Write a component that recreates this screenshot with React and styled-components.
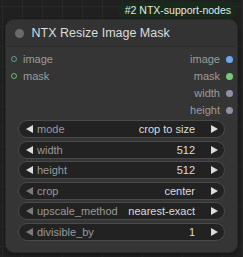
import React from "react";
import styled, { createGlobalStyle } from "styled-components";

const Global = createGlobalStyle`
  html, body { margin: 0; padding: 0; }
  body {
    width: 243px;
    height: 257px;
    overflow: hidden;
    background-color: #202020;
    background-image:
      linear-gradient(to right, #292929 1px, transparent 1px),
      linear-gradient(to bottom, #292929 1px, transparent 1px);
    background-size: 20px 20px;
    background-position: 2px 6px;
    font-family: "Liberation Sans", Arial, sans-serif;
  }
`;

const Page = styled.div`
  display: flex;
  flex-direction: column;
  align-items: stretch;
  padding: 2px 6px 0 6px;
  gap: 2px;
`;

const Badge = styled.div`
  align-self: flex-end;
  margin-right: 1px;
  height: 16px;
  padding: 0 5px 0 6px;
  display: flex;
  align-items: center;
  background: #172b1b;
  border-radius: 6px;
  color: #e6e6e6;
  font-size: 10.5px;
  white-space: nowrap;
`;

const Node = styled.div`
  width: 231px;
  background: #353535;
  border-radius: 8px;
  box-shadow: 0 0 0 1px #2b2b2b, 0 2px 6px rgba(0, 0, 0, 0.5);
  display: flex;
  flex-direction: column;
  overflow: hidden;
`;

const Title = styled.div`
  height: 26px;
  display: flex;
  align-items: center;
  gap: 8px;
  padding-left: 8.5px;
  background: #333;
  border-bottom: 1px solid #2c2c2c;
  color: #dcdcdc;
  font-size: 12.5px;
`;

const TitleDot = styled.span`
  width: 9px;
  height: 9px;
  border-radius: 50%;
  background: #6a6a6a;
`;

const Body = styled.div`
  display: flex;
  flex-direction: column;
  padding: 3.5px 0 11px 0;
`;

const SlotRow = styled.div`
  height: 17px;
  display: flex;
  align-items: center;
  justify-content: space-between;
  padding: 0 4px 0 5px;
  font-size: 11px;
  color: #9c9c9c;
`;

const Side = styled.div`
  display: flex;
  align-items: center;
  gap: ${(p) => p.$gap}px;
`;

const InDot = styled.span`
  width: 6px;
  height: 6px;
  border-radius: 50%;
  border: 1.5px solid ${(p) => p.$color};
  background: #2a3a36;
  box-sizing: border-box;
`;

const OutDot = styled.span`
  width: 7px;
  height: 7px;
  border-radius: 50%;
  background: ${(p) => p.$color};
`;

const Widgets = styled.div`
  display: flex;
  flex-direction: column;
  gap: 2.6px;
  padding: 1.5px 12px 0 12px;
`;

const Widget = styled.div`
  height: 18px;
  box-sizing: border-box;
  display: flex;
  align-items: center;
  background: #222;
  border: 1px solid #4a4a4a;
  border-radius: 9px;
  padding: 0 6px 0 7px;
  font-size: 11px;
`;

const Label = styled.span`
  color: #9a9a9a;
  margin-left: 4px;
  flex: 1;
  white-space: nowrap;
`;

const Value = styled.span`
  color: #dcdcdc;
  margin-right: 16px;
  white-space: nowrap;
`;

const Arrow = ({ dir, dim }) => (
  <svg width="7" height="8" viewBox="0 0 7 8" style={{ display: "block" }}>
    <polygon
      points={dir === "left" ? "7,0 7,8 0,4" : "0,0 0,8 7,4"}
      fill={dim ? "#7a7a7a" : "#dcdcdc"}
    />
  </svg>
);

const slots = [
  { in: "image", inColor: "#5f9e95", out: "image", outColor: "#6aa8f0" },
  { in: "mask", inColor: "#6fb56a", out: "mask", outColor: "#7cc87a" },
  { out: "width", outColor: "#8f8fa6" },
  { out: "height", outColor: "#8f8fa6" },
];

const widgets = [
  { label: "mode", value: "crop to size" },
  { label: "width", value: "512" },
  { label: "height", value: "512" },
  { label: "crop", value: "center", dim: true },
  { label: "upscale_method", value: "nearest-exact", dim: true },
  { label: "divisible_by", value: "1", dim: true },
];

export default function App() {
  return (
    <>
      <Global />
      <Page>
        <Badge>#2 NTX-support-nodes</Badge>
        <Node>
          <Title>
            <TitleDot />
            NTX Resize Image Mask
          </Title>
          <Body>
            {slots.map((s, i) => (
              <SlotRow key={i}>
                <Side $gap={6}>
                  {s.in && (
                    <>
                      <InDot $color={s.inColor} />
                      {s.in}
                    </>
                  )}
                </Side>
                <Side $gap={6}>
                  {s.out}
                  <OutDot $color={s.outColor} />
                </Side>
              </SlotRow>
            ))}
            <Widgets>
              {widgets.map((w) => (
                <Widget key={w.label}>
                  <Arrow dir="left" dim={w.dim} />
                  <Label>{w.label}</Label>
                  <Value>{w.value}</Value>
                  <Arrow dir="right" />
                </Widget>
              ))}
            </Widgets>
          </Body>
        </Node>
      </Page>
    </>
  );
}
